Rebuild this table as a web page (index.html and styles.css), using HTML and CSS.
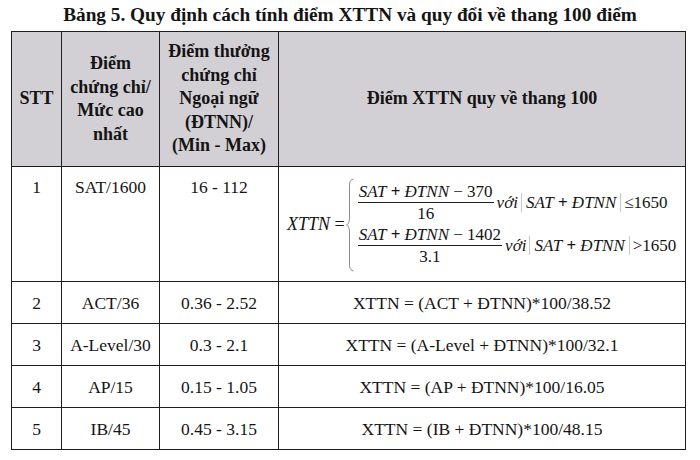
FILE: index.html
```html
<!DOCTYPE html>
<html lang="vi">
<head>
<meta charset="utf-8">
<title>Bảng 5</title>
<link rel="stylesheet" href="styles.css">
</head>
<body>
<h1 class="title">Bảng 5. Quy định cách tính điểm XTTN và quy đổi về thang 100 điểm</h1>
<table class="grid">
  <colgroup>
    <col class="c1"><col class="c2"><col class="c3"><col class="c4">
  </colgroup>
  <thead>
    <tr class="head">
      <th>STT</th>
      <th>Điểm<br>chứng chỉ/<br>Mức cao<br>nhất</th>
      <th>Điểm thưởng<br>chứng chỉ<br>Ngoại ngữ<br>(ĐTNN)/<br>(Min - Max)</th>
      <th>Điểm XTTN quy về thang 100</th>
    </tr>
  </thead>
  <tbody>
    <tr class="r1">
      <td class="top">1</td>
      <td class="top">SAT/1600</td>
      <td class="top">16 - 112</td>
      <td class="mathcell">
        <div class="piece">
          <span class="lhs"><i>XTTN</i> =</span>
          <svg class="brace" width="8" height="94" viewBox="0 0 8 94">
            <path d="M7.5 1 C3 2 3.5 6 3.5 12 L3.5 39 C3.5 44 2.5 46 0.5 47 C2.5 48 3.5 50 3.5 55 L3.5 82 C3.5 88 3 92 7.5 93" fill="none" stroke="#8a8a8a" stroke-width="1"/>
          </svg>
          <div class="cases">
            <div class="case">
              <span class="frac"><span class="num"><i>SAT</i> <b class="op">+</b> <i>ĐTNN</i> − 370</span><span class="den">16</span></span>
              <span class="cond"><i>với</i><span class="abs"><i>SAT</i> <b class="op">+</b> <i>ĐTNN</i></span>≤1650</span>
            </div>
            <div class="case">
              <span class="frac"><span class="num"><i>SAT</i> <b class="op">+</b> <i>ĐTNN</i> − 1402</span><span class="den">3.1</span></span>
              <span class="cond"><i>với</i><span class="abs"><i>SAT</i> <b class="op">+</b> <i>ĐTNN</i></span>&gt;1650</span>
            </div>
          </div>
        </div>
      </td>
    </tr>
    <tr class="rn">
      <td>2</td><td>ACT/36</td><td>0.36 - 2.52</td><td>XTTN = (ACT + ĐTNN)*100/38.52</td>
    </tr>
    <tr class="rn">
      <td>3</td><td>A-Level/30</td><td>0.3 - 2.1</td><td>XTTN = (A-Level + ĐTNN)*100/32.1</td>
    </tr>
    <tr class="rn">
      <td>4</td><td>AP/15</td><td>0.15 - 1.05</td><td>XTTN = (AP + ĐTNN)*100/16.05</td>
    </tr>
    <tr class="rn">
      <td>5</td><td>IB/45</td><td>0.45 - 3.15</td><td>XTTN = (IB + ĐTNN)*100/48.15</td>
    </tr>
  </tbody>
</table>
</body>
</html>
```

FILE: styles.css
```css
html, body {
  margin: 0;
  padding: 0;
  background: #ffffff;
}
body {
  font-family: "Liberation Serif", "Times New Roman", serif;
  color: #141414;
  width: 700px;
  height: 460px;
  overflow: hidden;
}
.title {
  margin: 0;
  padding-top: 3px;
  height: 28px;
  text-align: center;
  font-size: 19.3px;
  font-weight: bold;
  line-height: 24px;
}
.grid {
  margin-left: 11px;
  margin-top: 0;
  width: 674px;
  border-collapse: collapse;
  table-layout: fixed;
  font-size: 17.5px;
}
.c1 { width: 50px; }
.c2 { width: 98px; }
.c3 { width: 119px; }
.c4 { width: 407px; }
.grid th, .grid td {
  border: 1px solid #1e1e1e;
  text-align: center;
  padding: 0;
}
.grid th {
  background: #d3d0d5;
  font-weight: bold;
  font-size: 18px;
  line-height: 23.5px;
}
.head { height: 135px; }
.r1 { height: 115px; }
.rn { height: 42px; }
.rn td { line-height: 20px; }
.top {
  vertical-align: top;
  padding-top: 10px !important;
  line-height: 20px;
}
.mathcell {
  vertical-align: middle;
}
.piece {
  display: flex;
  align-items: center;
  justify-content: flex-start;
  padding-left: 8px;
  font-size: 17px;
}
.lhs {
  white-space: nowrap;
  margin-right: 1px;
  font-size: 18px;
}
.brace {
  display: block;
  margin-right: 3px;
  margin-top: 1px;
}
.cases {
  display: flex;
  flex-direction: column;
  gap: 1px;
}
.case {
  display: flex;
  align-items: center;
  white-space: nowrap;
}
.op {
  font-weight: bold;
}
.frac {
  display: inline-flex;
  flex-direction: column;
  align-items: center;
  padding: 0 1px;
}
.num {
  border-bottom: 1px solid #222;
  padding: 0 1px;
  line-height: 20px;
}
.den {
  line-height: 21px;
}
.cond {
  display: inline-flex;
  align-items: center;
  margin-left: 2px;
}
.abs {
  border-left: 1px solid #c8c8c8;
  border-right: 1px solid #c8c8c8;
  padding: 0 4px;
  margin: 0 3px 0 3px;
  line-height: 19px;
}
```
